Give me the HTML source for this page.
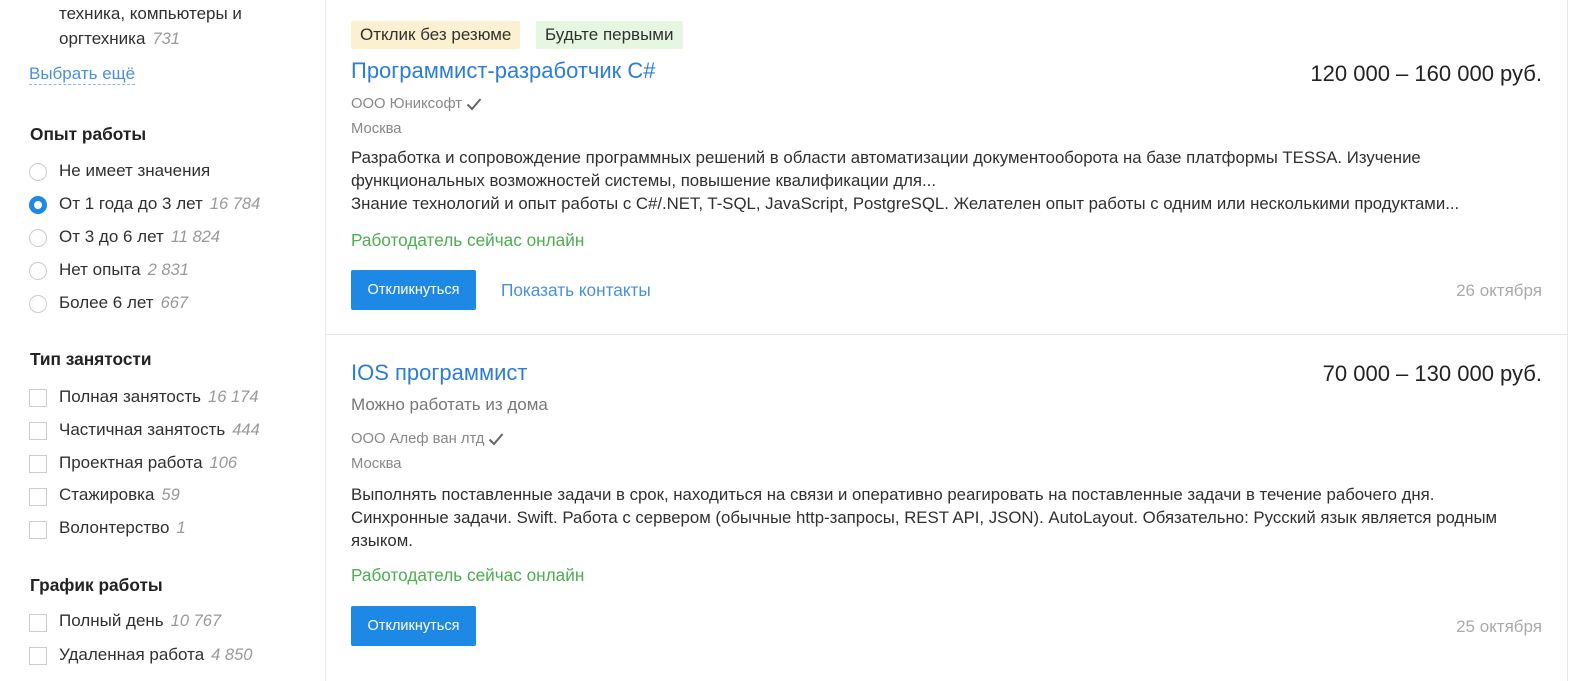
<!DOCTYPE html>
<html><head><meta charset="utf-8"><style>
body{margin:0;width:1593px;height:681px;overflow:hidden;background:#fff;font-family:"Liberation Sans",Arial,sans-serif;color:#303030;position:relative}
.a{position:absolute;white-space:nowrap}
.n{color:#999;font-style:italic;font-size:16.5px;margin-left:7px}
.t{font-size:17px}
.h{font-size:17.3px;font-weight:bold;color:#222}
.r{position:absolute;left:29px;border:1px solid #ccc;border-radius:50%;box-sizing:border-box;width:18px;height:18px}
.c{position:absolute;left:29px;width:18px;height:18px;border:1px solid #ccc;box-sizing:border-box}
.card{position:absolute;left:325px;width:1241px;border-left:1px solid #e8e8e8;border-right:1px solid #e8e8e8}
.tag{position:absolute;top:21px;height:28px;line-height:28px;padding:0 9px;font-size:17px;border-radius:2px}
.title{font-size:22px;color:#2b7dd9}
.sal{font-size:22px;color:#222}
.sm{font-size:14.8px;color:#888}
.desc{font-size:16.8px;line-height:23px;color:#303030}
.on{font-size:17.2px;color:#4bae4f}
.btn{position:absolute;left:25px;width:125px;height:40px;background:#1e88e5;color:#fff;font-size:14.5px;text-align:center;line-height:40px;border-radius:2px}
.date{font-size:17px;color:#aaa}
svg{vertical-align:middle;margin-left:4px}
</style></head><body>
<div class="a t" style="left:59px;top:4px">техника, компьютеры и</div>
<div class="a t" style="left:59px;top:29px">оргтехника<span class="n">731</span></div>
<div class="a t" style="left:29px;top:64px;color:#4a90d9;border-bottom:1px dashed #8bb8e8">Выбрать ещё</div>
<div class="a h" style="left:30px;top:124px">Опыт работы</div>
<div class="r" style="top:163px"></div><div class="a t" style="left:59px;top:161px">Не имеет значения</div>
<div class="r" style="top:196px;border:5px solid #1e88e5"></div><div class="a t" style="left:59px;top:194px">От 1 года до 3 лет<span class="n">16 784</span></div>
<div class="r" style="top:229px"></div><div class="a t" style="left:59px;top:227px">От 3 до 6 лет<span class="n">11 824</span></div>
<div class="r" style="top:262px"></div><div class="a t" style="left:59px;top:260px">Нет опыта<span class="n">2 831</span></div>
<div class="r" style="top:295px"></div><div class="a t" style="left:59px;top:293px">Более 6 лет<span class="n">667</span></div>
<div class="a h" style="left:30px;top:349px">Тип занятости</div>
<div class="c" style="top:389px"></div><div class="a t" style="left:59px;top:387px">Полная занятость<span class="n">16 174</span></div>
<div class="c" style="top:422px"></div><div class="a t" style="left:59px;top:420px">Частичная занятость<span class="n">444</span></div>
<div class="c" style="top:455px"></div><div class="a t" style="left:59px;top:453px">Проектная работа<span class="n">106</span></div>
<div class="c" style="top:488px"></div><div class="a t" style="left:59px;top:485px">Стажировка<span class="n">59</span></div>
<div class="c" style="top:521px"></div><div class="a t" style="left:59px;top:518px">Волонтерство<span class="n">1</span></div>
<div class="a h" style="left:30px;top:575px">График работы</div>
<div class="c" style="top:614px"></div><div class="a t" style="left:59px;top:611px">Полный день<span class="n">10 767</span></div>
<div class="c" style="top:647px"></div><div class="a t" style="left:59px;top:645px">Удаленная работа<span class="n">4 850</span></div>

<div class="card" style="top:0;height:334px;border-bottom:1px solid #e8e8e8">
<div class="tag" style="left:25px;background:#fbf1d0">Отклик без резюме</div>
<div class="tag" style="left:210px;background:#e5f6e1">Будьте первыми</div>
<div class="a title" style="left:25px;top:58px">Программист-разработчик C#</div>
<div class="a sal" style="right:25px;top:61px">120 000 – 160 000 руб.</div>
<div class="a sm" style="left:25px;top:96px">ООО Юниксофт<svg width="16" height="14" viewBox="0 0 16 14"><path d="M1.5 7.5l4.5 4.5L14.5 2" fill="none" stroke="#666" stroke-width="2"/></svg></div>
<div class="a sm" style="left:25px;top:121px">Москва</div>
<div class="a desc" style="left:25px;top:146px">Разработка и сопровождение программных решений в области автоматизации документооборота на базе платформы TESSA. Изучение<br>функциональных возможностей системы, повышение квалификации для...<br>Знание технологий и опыт работы с C#/.NET, T-SQL, JavaScript, PostgreSQL. Желателен опыт работы с одним или несколькими продуктами...</div>
<div class="a on" style="left:25px;top:230px">Работодатель сейчас онлайн</div>
<div class="btn" style="top:270px">Откликнуться</div>
<div class="a" style="left:175px;top:280px;font-size:17.2px;color:#4a90d9">Показать контакты</div>
<div class="a date" style="right:25px;top:281px">26 октября</div>
</div>
<div class="card" style="top:335px;height:346px">
<div class="a title" style="left:25px;top:25px">IOS программист</div>
<div class="a sal" style="right:25px;top:26px">70 000 – 130 000 руб.</div>
<div class="a" style="left:25px;top:60px;font-size:17px;color:#777">Можно работать из дома</div>
<div class="a sm" style="left:25px;top:96px">ООО Алеф ван лтд<svg width="16" height="14" viewBox="0 0 16 14"><path d="M1.5 7.5l4.5 4.5L14.5 2" fill="none" stroke="#666" stroke-width="2"/></svg></div>
<div class="a sm" style="left:25px;top:121px">Москва</div>
<div class="a desc" style="left:25px;top:148px">Выполнять поставленные задачи в срок, находиться на связи и оперативно реагировать на поставленные задачи в течение рабочего дня.<br>Синхронные задачи. Swift. Работа с сервером (обычные http-запросы, REST API, JSON). AutoLayout. Обязательно: Русский язык является родным<br>языком.</div>
<div class="a on" style="left:25px;top:230px">Работодатель сейчас онлайн</div>
<div class="btn" style="top:271px">Откликнуться</div>
<div class="a date" style="right:25px;top:282px">25 октября</div>
</div>
</body></html>
